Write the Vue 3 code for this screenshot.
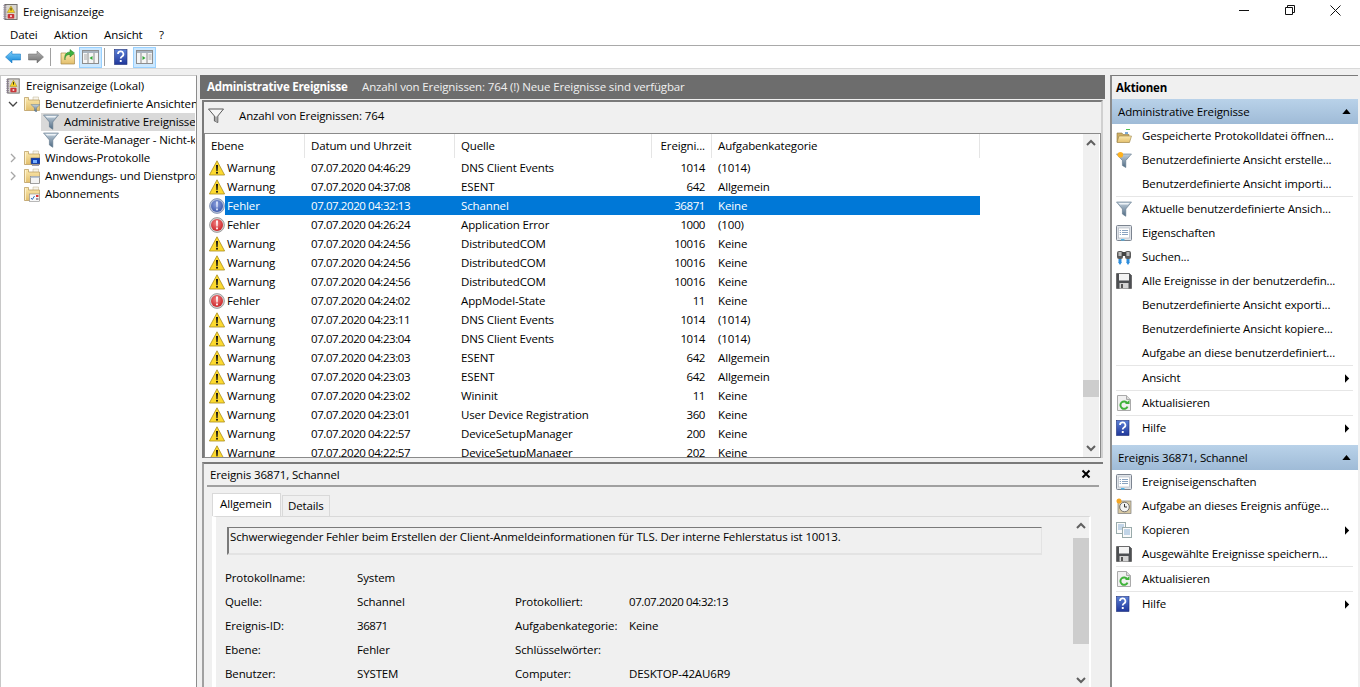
<script setup>
const S = 'Warnung', F = 'Fehler'
const rows = [
  ['w', S, '07.07.2020 04:46:29', 'DNS Client Events', '1014', '(1014)'],
  ['w', S, '07.07.2020 04:37:08', 'ESENT', '642', 'Allgemein'],
  ['s', F, '07.07.2020 04:32:13', 'Schannel', '36871', 'Keine'],
  ['e', F, '07.07.2020 04:26:24', 'Application Error', '1000', '(100)'],
  ['w', S, '07.07.2020 04:24:56', 'DistributedCOM', '10016', 'Keine'],
  ['w', S, '07.07.2020 04:24:56', 'DistributedCOM', '10016', 'Keine'],
  ['w', S, '07.07.2020 04:24:56', 'DistributedCOM', '10016', 'Keine'],
  ['e', F, '07.07.2020 04:24:02', 'AppModel-State', '11', 'Keine'],
  ['w', S, '07.07.2020 04:23:11', 'DNS Client Events', '1014', '(1014)'],
  ['w', S, '07.07.2020 04:23:04', 'DNS Client Events', '1014', '(1014)'],
  ['w', S, '07.07.2020 04:23:03', 'ESENT', '642', 'Allgemein'],
  ['w', S, '07.07.2020 04:23:03', 'ESENT', '642', 'Allgemein'],
  ['w', S, '07.07.2020 04:23:02', 'Wininit', '11', 'Keine'],
  ['w', S, '07.07.2020 04:23:01', 'User Device Registration', '360', 'Keine'],
  ['w', S, '07.07.2020 04:22:57', 'DeviceSetupManager', '200', 'Keine'],
  ['w', S, '07.07.2020 04:22:57', 'DeviceSetupManager', '202', 'Keine']
]
const tree = [
  { t: 'Ereignisanzeige (Lokal)', lv: 0, i: 'log' },
  { t: 'Benutzerdefinierte Ansichten', lv: 1, i: 'folderFilter', c: 'open' },
  { t: 'Administrative Ereignisse', lv: 2, i: 'funnel', sel: true },
  { t: 'Geräte-Manager - Nicht-kritische Ereignisse', lv: 2, i: 'funnel' },
  { t: 'Windows-Protokolle', lv: 1, i: 'folderPc', c: 'closed' },
  { t: 'Anwendungs- und Dienstprotokolle', lv: 1, i: 'folderWin', c: 'closed' },
  { t: 'Abonnements', lv: 1, i: 'folderCal' }
]
const actions1 = [
  { t: 'Gespeicherte Protokolldatei öffnen...', i: 'open' },
  { t: 'Benutzerdefinierte Ansicht erstelle...', i: 'funnelNew' },
  { t: 'Benutzerdefinierte Ansicht importi...', sep: true },
  { t: 'Aktuelle benutzerdefinierte Ansich...', i: 'funnel' },
  { t: 'Eigenschaften', i: 'props' },
  { t: 'Suchen...', i: 'find' },
  { t: 'Alle Ereignisse in der benutzerdefin...', i: 'save' },
  { t: 'Benutzerdefinierte Ansicht exporti...' },
  { t: 'Benutzerdefinierte Ansicht kopiere...' },
  { t: 'Aufgabe an diese benutzerdefiniert...', sep: true },
  { t: 'Ansicht', sub: true, sep: true },
  { t: 'Aktualisieren', i: 'refresh', sep: true },
  { t: 'Hilfe', i: 'help', sub: true }
]
const actions2 = [
  { t: 'Ereigniseigenschaften', i: 'props' },
  { t: 'Aufgabe an dieses Ereignis anfüge...', i: 'task' },
  { t: 'Kopieren', i: 'copy', sub: true },
  { t: 'Ausgewählte Ereignisse speichern...', i: 'save', sep: true },
  { t: 'Aktualisieren', i: 'refresh', sep: true },
  { t: 'Hilfe', i: 'help', sub: true }
]
const sections = [
  { title: 'Administrative Ereignisse', items: actions1 },
  { title: 'Ereignis 36871, Schannel', items: actions2 }
]
const fields = [
  ['Protokollname:', 'System', '', ''],
  ['Quelle:', 'Schannel', 'Protokolliert:', '07.07.2020 04:32:13'],
  ['Ereignis-ID:', '36871', 'Aufgabenkategorie:', 'Keine'],
  ['Ebene:', 'Fehler', 'Schlüsselwörter:', ''],
  ['Benutzer:', 'SYSTEM', 'Computer:', 'DESKTOP-42AU6R9']
]
const isNum = v => /^[\d.: ]+$/.test(v)
</script>

<template>
  <div class="app">
    <svg class="defs" width="0" height="0" aria-hidden="true">
      <defs>
        <linearGradient id="gFun" x1="0" y1="0" x2="0" y2="1"><stop offset="0" stop-color="#c3d0dc"/><stop offset="1" stop-color="#4f6b84"/></linearGradient>
        <linearGradient id="gFold" x1="0" y1="0" x2="0" y2="1"><stop offset="0" stop-color="#fbe9b0"/><stop offset="1" stop-color="#e3bf6c"/></linearGradient>
        <linearGradient id="gBlueArrow" x1="0" y1="0" x2="0" y2="1"><stop offset="0" stop-color="#7fd0fb"/><stop offset="1" stop-color="#1184d6"/></linearGradient>
        <linearGradient id="gGrayArrow" x1="0" y1="0" x2="0" y2="1"><stop offset="0" stop-color="#b5b5b5"/><stop offset="1" stop-color="#6f6f6f"/></linearGradient>
        <linearGradient id="gHelp" x1="0" y1="0" x2="0" y2="1"><stop offset="0" stop-color="#5a7fd6"/><stop offset="1" stop-color="#20379a"/></linearGradient>
        <radialGradient id="gRed" cx=".45" cy=".35" r=".7"><stop offset="0" stop-color="#f08080"/><stop offset="1" stop-color="#c81e22"/></radialGradient>
        <radialGradient id="gBlue" cx=".45" cy=".35" r=".7"><stop offset="0" stop-color="#8a9fdc"/><stop offset="1" stop-color="#3a55a8"/></radialGradient>

        <symbol id="w" viewBox="0 0 16 16"><path d="M8 .8 15.6 15H.4Z" fill="#fcd92f" stroke="#a98d1e" stroke-width=".8"/><path d="M7 5h2l-.4 6H7.4Z" fill="#111"/><rect x="7.1" y="11.8" width="1.8" height="1.8" fill="#111"/></symbol>
        <symbol id="e" viewBox="0 0 16 16"><circle cx="8" cy="8" r="7.4" fill="#d5d5d5" stroke="#8a8a8a" stroke-width=".8"/><circle cx="8" cy="8" r="6" fill="url(#gRed)"/><path d="M7 3.5h2l-.4 6H7.4Z" fill="#fff"/><rect x="7.1" y="10.5" width="1.8" height="1.8" fill="#fff"/></symbol>
        <symbol id="s" viewBox="0 0 16 16"><circle cx="8" cy="8" r="7.4" fill="#b9c4dc" stroke="#7485a8" stroke-width=".8"/><circle cx="8" cy="8" r="6" fill="url(#gBlue)"/><path d="M7 3.5h2l-.4 6H7.4Z" fill="#dfe6fa"/><rect x="7.1" y="10.5" width="1.8" height="1.8" fill="#dfe6fa"/></symbol>

        <symbol id="funnel" viewBox="0 0 16 16"><path d="M.5 1h15L9.8 8v7.3L6.4 13V8Z" fill="url(#gFun)" stroke="#5d7488" stroke-width=".6"/><path d="M2.5 2h11L12 3.5H4Z" fill="#eef3f7"/></symbol>
        <symbol id="funnelOut" viewBox="0 0 16 16"><path d="M.5 1h15L9.8 8v6.5L6.4 13V8Z" fill="#f6f6f6" stroke="#5a5a5a"/><path d="M7 8.5h2v5H7Z" fill="#a8a8a8"/></symbol>
        <symbol id="funnelNew" viewBox="0 0 16 16"><path d="M.5 2h15L9.8 8.5v7L6.4 13.5v-5Z" fill="url(#gFun)" stroke="#5d7488" stroke-width=".6"/><circle cx="4.4" cy="2.8" r="2.8" fill="#ffb21f"/></symbol>
        <symbol id="log" viewBox="0 0 16 18"><rect x="2" y="1" width="13" height="16" fill="#d9d6cf" stroke="#6d6a68"/><path d="M1 1.5v15M3 1.5v15" stroke="#7d6c8e" stroke-dasharray="1 1"/><path d="M8.5 2.5l4 7h-8Z" fill="#f9d423" stroke="#8f7d1c" stroke-width=".5"/><rect x="8.1" y="4.5" width=".9" height="3" fill="#111"/><rect x="5" y="11" width="7" height="5" rx="1" fill="#c9353a"/><circle cx="8.5" cy="13.4" r="1.1" fill="#f4d7d7"/></symbol>
        <g id="fold"><path d="M9 1h5.500v5H9Z" fill="#f7f4ea" stroke="#bfb38e" stroke-width=".5"/><path d="M.5 14.500V1.500h4v2.500h11v10.500Z" fill="url(#gFold)" stroke="#b4975a" stroke-width=".7"/><path d="M1.500 2v12" stroke="#fff6d8" stroke-width=".8"/></g>
        <symbol id="folder" viewBox="0 0 16 16"><use href="#fold"/></symbol>
        <symbol id="folderFilter" viewBox="0 0 16 16"><use href="#fold"/><path d="M7 8.500h9l-3.500 3.500v4l-2-1.200v-2.800Z" fill="url(#gFun)" stroke="#4f6b84" stroke-width=".4"/></symbol>
        <symbol id="folderPc" viewBox="0 0 16 16"><use href="#fold"/><rect x="7" y="8" width="9" height="6" fill="#0e3fb5" stroke="#556" stroke-width=".5"/><rect x="9" y="10" width="4" height="3" fill="#79b2ff"/><rect x="8" y="14.500" width="7" height="1.500" fill="#99a"/></symbol>
        <symbol id="folderWin" viewBox="0 0 16 16"><use href="#fold"/><rect x="6.500" y="8.500" width="9" height="7" fill="#f3f3f3" stroke="#7b7b7b" stroke-width=".7"/><rect x="6.500" y="8.500" width="9" height="1.500" fill="#b8c4d4"/></symbol>
        <symbol id="folderCal" viewBox="0 0 16 16"><use href="#fold"/><rect x="5.500" y="8" width="10" height="7.500" fill="#f8f8f8" stroke="#8c8c8c" stroke-width=".6"/><path d="M7 12l1.300 1.500L10.500 10" fill="none" stroke="#2d6ec2" stroke-width="1"/><rect x="12" y="9" width="2.500" height="2" fill="#d33"/><rect x="12" y="12" width="2.500" height="2" fill="#99a"/></symbol>
        <symbol id="open" viewBox="0 0 16 16"><path d="M1 5h5l1 1.500h6V14H1Z" fill="#cfae63" stroke="#8f7a45" stroke-width=".6"/><path d="M3 8h12.500L13.500 14.500H1Z" fill="url(#gFold)" stroke="#9a8348" stroke-width=".6"/><rect x="10" y="1" width="4" height="1" fill="#4fc04f"/><rect x="9" y="4" width="3" height="2" fill="#7aa9d8"/></symbol>
        <symbol id="props" viewBox="0 0 16 16"><rect x=".5" y=".5" width="15" height="15" rx="1" fill="#dfe3e8" stroke="#7c8490"/><rect x="2.500" y="3" width="11" height="10" fill="#fff" stroke="#a7afb9" stroke-width=".6"/><path d="M6 5.500h6M6 7.500h6M6 9.500h6" stroke="#6c8cb0" stroke-width=".8"/><path d="M3.700 5.500h1.300M3.700 7.500h1.300M3.700 9.500h1.300" stroke="#6c8cb0" stroke-width=".8"/><rect x="5" y="14" width="3.500" height="1.500" fill="#4fb4e8"/></symbol>
        <symbol id="find" viewBox="0 0 16 16"><rect x="1" y="2" width="6" height="8" rx="2" fill="#5c5c5c"/><rect x="9" y="2" width="6" height="8" rx="2" fill="#5c5c5c"/><rect x="6" y="3" width="4" height="4" fill="#444"/><rect x="2.500" y="3" width="3" height="4" fill="#bcbcbc"/><rect x="10.500" y="3" width="3" height="4" fill="#bcbcbc"/><path d="M4 10v3M12 10v3" stroke="#2e8ddc" stroke-width="3"/><path d="M2 13h4l-2 3ZM10 13h4l-2 3Z" fill="#2e8ddc"/></symbol>
        <symbol id="save" viewBox="0 0 16 16"><path d="M.5.500h13l2 2v13H.5Z" fill="#4d4f52" stroke="#333" stroke-width=".5"/><rect x="3" y="1" width="10" height="6.500" fill="#f3f3f3"/><rect x="3.500" y="10" width="9" height="5.500" fill="#d4d4d4"/><rect x="5" y="11" width="2" height="4" fill="#555"/></symbol>
        <symbol id="refresh" viewBox="0 0 16 16"><path d="M1.500.500h9l4 4v11h-13Z" fill="#f0f0f0" stroke="#aaa"/><path d="M10.500.500v4h4" fill="#dcdcdc" stroke="#aaa"/><path d="M11.300 8.200a3.700 3.700 0 1 0 .2 3.400" fill="none" stroke="#3fb23a" stroke-width="2"/><path d="M9 9h4.500v-4Z" fill="#3fb23a"/></symbol>
        <symbol id="help" viewBox="0 0 16 16"><rect x=".5" y=".5" width="12.500" height="15" fill="url(#gHelp)" stroke="#1c2d78" stroke-width=".6"/><path d="M4 5a2.700 2.700 0 1 1 4 2.400c-1 .6-1.300 1-1.300 2.100" fill="none" stroke="#fff" stroke-width="1.700"/><rect x="5.800" y="11" width="1.900" height="2" fill="#fff"/></symbol>
        <symbol id="task" viewBox="0 0 16 16"><rect x="2" y="3" width="13" height="12.500" fill="#d9c9a3" stroke="#7b7b7b" stroke-width=".7"/><circle cx="8.500" cy="9" r="4.800" fill="#f3f3f3" stroke="#555" stroke-width=".8"/><path d="M8.500 6v3h2.500" fill="none" stroke="#333"/><circle cx="3" cy="3" r="2.500" fill="#f5a623"/></symbol>
        <symbol id="copy" viewBox="0 0 16 16"><rect x=".5" y=".5" width="9" height="11" fill="#fafafa" stroke="#9aa"/><path d="M2 3h6M2 5h6M2 7h6" stroke="#5a91c4" stroke-width=".7"/><rect x="6.500" y="5.500" width="9" height="10" fill="#fafafa" stroke="#9aa"/><path d="M8 8h6M8 10h6M8 12h6" stroke="#5a91c4" stroke-width=".7"/></symbol>
        <symbol id="paneL" viewBox="0 0 17 14"><rect x=".5" y=".5" width="16" height="13" fill="#f5f5f5" stroke="#8d8d8d"/><rect x="1" y="1" width="15" height="2" fill="#a9b4bf"/><path d="M6 3v10M12 3v10" stroke="#8d8d8d"/><path d="M2 5h3M2 7h3M2 9h3" stroke="#8d8d8d" stroke-width=".7"/><path d="M10.500 6v4l-3-2Z" fill="#2fa835"/></symbol>
        <symbol id="paneR" viewBox="0 0 17 14"><rect x=".5" y=".5" width="16" height="13" fill="#f5f5f5" stroke="#8d8d8d"/><rect x="1" y="1" width="15" height="2" fill="#a9b4bf"/><path d="M11 3v10M5 3v10" stroke="#8d8d8d"/><path d="M12.500 5h3M12.500 7h3M12.500 9h3" stroke="#8d8d8d" stroke-width=".7"/><path d="M6.500 6v4l3-2Z" fill="#2fa835"/></symbol>
        <symbol id="folderUp" viewBox="0 0 16 16"><path d="M1 4h5l1 1.500h7.500V15H1Z" fill="url(#gFold)" stroke="#a6894a" stroke-width=".7"/><path d="M5 11c0-4 2-5.500 5-5.500V8l4.500-4L10 .5v2.500C6 3 4 6 5 11Z" fill="#3eb13e" stroke="#24802a" stroke-width=".5"/></symbol>
      </defs>
    </svg>

    <header class="title">
      <svg class="ic-log-t"><use href="#log"/></svg>
      <span class="title-t">Ereignisanzeige</span>
      <div class="win">
        <svg width="46" height="24" viewBox="0 0 46 24"><path d="M16 10.500h10" stroke="#111"/></svg>
        <svg width="46" height="24" viewBox="0 0 46 24"><path d="M16.500 7.500h7v7h-7ZM18.500 7.500v-2h7v7h-2" fill="none" stroke="#111"/></svg>
        <svg width="46" height="24" viewBox="0 0 46 24"><path d="M15.500 5.500l10 10M25.500 5.500l-10 10" stroke="#111" fill="none"/></svg>
      </div>
    </header>

    <nav class="menu"><span>Datei</span><span>Aktion</span><span>Ansicht</span><span>?</span></nav>

    <div class="toolbar">
      <svg class="tb-a" viewBox="0 0 16 14"><path d="M.5 7 7 1v3h8.500v6H7v3Z" fill="url(#gBlueArrow)" stroke="#0c6fbb" stroke-width=".5"/></svg>
      <svg class="tb-a tb-b" viewBox="0 0 16 14"><path d="M15.500 7 9 1v3H.5v6H9v3Z" fill="url(#gGrayArrow)" stroke="#666" stroke-width=".5"/></svg>
      <i class="tb-sep"></i>
      <svg class="tb-i"><use href="#folderUp"/></svg>
      <span class="tb-on tb-on1"><svg class="tb-p"><use href="#paneL"/></svg></span>
      <i class="tb-sep tb-sep2"></i>
      <svg class="tb-h"><use href="#help"/></svg>
      <span class="tb-on tb-on2"><svg class="tb-p"><use href="#paneR"/></svg></span>
    </div>

    <main class="main">
      <aside class="left">
        <div v-for="n in tree" :key="n.t" class="tn" :class="['lv' + n.lv, { sel: n.sel }]">
          <svg v-if="n.c" class="chev" viewBox="0 0 10 10"><path v-if="n.c === 'open'" d="M1 3l4 4 4-4" fill="none" stroke="#444" stroke-width="1.300"/><path v-else d="M3 1l4 4-4 4" fill="none" stroke="#a6a6a6" stroke-width="1.300"/></svg>
          <svg class="tn-i"><use :href="'#' + n.i"/></svg>
          <span class="tn-t">{{ n.t }}</span>
        </div>
      </aside>

      <section class="mid">
        <div class="mhead"><b>Administrative Ereignisse</b><span>Anzahl von Ereignissen: 764 (!) Neue Ereignisse sind verfügbar</span></div>
        <div class="upper">
          <div class="fbar"><svg class="f-i"><use href="#funnelOut"/></svg><span>Anzahl von Ereignissen: 764</span></div>
          <div class="list">
            <div class="table">
              <div class="grid thead">
                <div class="th c-ebene">Ebene</div>
                <div class="th">Datum und Uhrzeit</div>
                <div class="th">Quelle</div>
                <div class="th num">Ereigni...</div>
                <div class="th">Aufgabenkategorie</div>
              </div>
              <div class="tbody">
                <div v-for="(r, i) in rows" :key="i" class="grid row" :class="{ on: r[0] === 's' }">
                  <div class="ico"><svg class="rw"><use :href="'#' + r[0]"/></svg></div>
                  <div class="cell c1">{{ r[1] }}</div>
                  <div class="cell digits">{{ r[2] }}</div>
                  <div class="cell">{{ r[3] }}</div>
                  <div class="cell num digits">{{ r[4] }}</div>
                  <div class="cell">{{ r[5] }}</div>
                </div>
              </div>
            </div>
            <div class="sb sb1">
              <svg class="ar" viewBox="0 0 16 16"><path d="M4 10l4-4 4 4" fill="none" stroke="#606060" stroke-width="2"/></svg>
              <div class="thumb1"></div>
              <svg class="ar ar-b" viewBox="0 0 16 16"><path d="M4 6l4 4 4-4" fill="none" stroke="#606060" stroke-width="2"/></svg>
            </div>
          </div>
        </div>
        <div class="detail">
          <div class="dhead"><span>Ereignis 36871, Schannel</span><svg class="x" viewBox="0 0 10 10"><path d="M1.500 1.500l7 7M8.500 1.500l-7 7" stroke="#000" stroke-width="2"/></svg></div>
          <div class="tabs"><span class="tab act">Allgemein</span><span class="tab">Details</span></div>
          <div class="tabpane">
            <div class="tabbody">
              <div class="msg">Schwerwiegender Fehler beim Erstellen der Client-Anmeldeinformationen für TLS. Der interne Fehlerstatus ist 10013.</div>
              <div class="fields">
                <template v-for="f in fields" :key="f[0]">
                  <span v-for="(v, k) in f" :key="k" :class="{ digits: isNum(v) }">{{ v }}</span>
                </template>
              </div>
            </div>
            <div class="sb sb2">
              <svg class="ar" viewBox="0 0 16 16"><path d="M4 10l4-4 4 4" fill="none" stroke="#606060" stroke-width="2"/></svg>
              <div class="thumb2"></div>
              <svg class="ar ar-b" viewBox="0 0 16 16"><path d="M4 6l4 4 4-4" fill="none" stroke="#606060" stroke-width="2"/></svg>
            </div>
          </div>
        </div>
      </section>

      <aside class="right">
        <div class="rtitle">Aktionen</div>
        <template v-for="s in sections" :key="s.title">
          <div class="rsec"><span>{{ s.title }}</span><svg class="tri" viewBox="0 0 10 6"><path d="M0 6 5 0l5 6Z" fill="#000"/></svg></div>
          <div class="ritems">
            <div v-for="a in s.items" :key="a.t" class="ra" :class="{ sep: a.sep }">
              <div class="ra-row">
                <svg v-if="a.i" class="ra-i"><use :href="'#' + a.i"/></svg>
                <span v-else class="ra-i"></span>
                <span class="ra-t">{{ a.t }}</span>
                <svg v-if="a.sub" class="subm" viewBox="0 0 6 10"><path d="M0 0l5 5-5 5Z" fill="#000"/></svg>
              </div>
            </div>
          </div>
        </template>
      </aside>
    </main>
  </div>
</template>

<style>
html, body { margin: 0; background: #fff; }
</style>

<style scoped>
.app { width: 1360px; height: 687px; overflow: hidden; display: flex; flex-direction: column; background: #fff; color: #000; font: 11.5px/16px "Open Sans", "Noto Sans", sans-serif; letter-spacing: -.13px; }
.defs { display: block; height: 0; }
svg { display: block; flex: none; }
.digits { letter-spacing: -.42px; }

.title { height: 24px; display: flex; align-items: center; padding-left: 3px; }
.ic-log-t { width: 15px; height: 18px; margin-right: 5px; }
.win { margin-left: auto; display: flex; margin-right: -1px; }

.menu { height: 21px; display: flex; align-items: center; padding-left: 10px; gap: 16.5px; border-bottom: 1px solid #a9a9a9; }

.toolbar { height: 22px; display: flex; align-items: center; padding-left: 5px; border-bottom: 1px solid #d9d9d9; flex: none; }
.tb-a { width: 16px; height: 14px; }
.tb-b { margin-left: 7px; }
.tb-sep { width: 1px; height: 18px; background: #a0a0a0; margin-left: 6px; }
.tb-sep2 { margin-left: 2px; }
.tb-i { width: 16px; height: 16px; margin-left: 9px; }
.tb-on { width: 23px; height: 21px; box-sizing: border-box; background: #cce8ff; border: 1px solid #99d1ff; display: flex; align-items: center; justify-content: center; }
.tb-on1 { margin-left: 3px; }
.tb-on2 { margin-left: 3px; }
.tb-p { width: 17px; height: 14px; }
.tb-h { width: 16px; height: 16px; margin-left: 9px; }

.main { flex: 1; min-height: 0; background: #f0f0f0; padding-top: 6px; display: flex; }

.left { width: 197px; flex: none; box-sizing: border-box; background: #fff; border: 1px solid #c8c8c8; border-right: 1px solid #8c8c8c; border-bottom: 0; padding: 1px 0 0; overflow: hidden; }
.tn { height: 18px; display: flex; align-items: center; white-space: nowrap; overflow: hidden; width: 194px; }
.tn-i { width: 16px; height: 16px; }
.lv0 { padding-left: 4px; }
.lv0 .tn-t { margin-left: 5px; }
.lv1 { padding-left: 23px; }
.lv1 .tn-t { margin-left: 5px; }
.chev { width: 10px; height: 10px; margin-left: -16px; margin-right: 6px; }
.lv2 { margin-left: 40px; width: 154px; padding-left: 2px; box-sizing: border-box; }
.lv2 .tn-t { margin-left: 5px; }
.tn.sel { background: #d9d9d9; }

.mid { width: 905px; margin-left: 3px; flex: none; display: flex; flex-direction: column; }
.mhead { height: 24px; flex: none; background: #6d6d6d; color: #f0f0f0; display: flex; align-items: center; padding-left: 7px; }
.mhead b { color: #fff; font-weight: 700; letter-spacing: -.24px; width: 155px; }
.upper { margin: 1px 2px 0 2px; height: 358px; flex: none; box-sizing: border-box; border: 2px solid #7a7a7a; border-bottom: 0; border-right-color: #d0d0d0; display: flex; flex-direction: column; }
.fbar { height: 31px; flex: none; box-sizing: border-box; display: flex; align-items: center; padding: 0 0 4px 4px; }
.f-i { width: 16px; height: 16px; }
.fbar span { margin-left: 15px; }
.list { flex: 1; min-height: 0; box-sizing: border-box; border: 1px solid #8a8a8a; background: #fff; display: flex; overflow: hidden; }
.table { flex: 1; min-width: 0; display: flex; flex-direction: column; overflow: hidden; }
.grid { display: grid; grid-template-columns: 20px 80px 150px 197px 60px 268px; width: 775px; }
.thead { height: 24px; flex: none; }
.th { line-height: 24px; padding-left: 6px; border-right: 1px solid #e5e5e5; box-sizing: border-box; white-space: nowrap; overflow: hidden; }
.c-ebene { grid-column: 1 / 3; }
.th.num { padding-left: 0; padding-right: 6px; text-align: right; }
.tbody { flex: 1; min-height: 0; overflow: hidden; }
.row { height: 19px; }
.ico { display: flex; align-items: center; padding-left: 4px; }
.rw { width: 16px; height: 16px; }
.cell { line-height: 19px; padding-left: 6px; white-space: nowrap; overflow: hidden; }
.c1 { padding-left: 2px; }
.cell.num { padding: 0 7px 0 0; text-align: right; }
.row.on .cell { background: #0078d7; color: #fff; }

.sb { width: 16px; flex: none; background: #f0f0f0; display: flex; flex-direction: column; }
.sb1 { margin-right: 1px; }
.ar { width: 16px; height: 16px; }
.sb1 .ar { margin-top: 1px; }
.sb1 .ar-b { margin-top: auto; margin-bottom: 1px; }
.thumb1 { height: 17px; margin-top: 229px; background: #cdcdcd; }

.detail { margin: 4px 2px 0 2px; flex: 1; min-height: 0; box-sizing: border-box; border-top: 2px solid #7a7a7a; border-left: 2px solid #a0a0a0; display: flex; flex-direction: column; }
.dhead { height: 23px; flex: none; margin: 0 4px 0 3px; box-sizing: border-box; display: flex; align-items: center; justify-content: space-between; padding: 0 8px 0 3px; border-bottom: 2px solid #a0a0a0; }
.dhead .x { width: 10px; height: 10px; margin-bottom: 2px; }
.tabs { margin: 6px 0 0 8px; height: 23px; flex: none; display: flex; align-items: flex-end; }
.tab { box-sizing: border-box; height: 21px; line-height: 19px; padding: 0 5px; border: 1px solid #d9d9d9; border-bottom: 0; margin-left: 1px; background: #f0f0f0; }
.tab.act { height: 23px; line-height: 20px; width: 69px; padding: 0 0 0 7px; margin-left: 0; background: #fff; }
.tabpane { margin: 0 12px 0 8px; flex: 1; min-height: 0; box-sizing: border-box; border-top: 1px solid #d9d9d9; border-left: 4px solid #fff; border-right: 2px solid #fff; display: flex; }
.tabbody { flex: 1; min-width: 0; box-sizing: border-box; padding: 10px 0 0 9px; }
.msg { width: 815px; height: 28px; box-sizing: border-box; margin-left: 2px; padding-left: 1px; border: 1px solid #e3e3e3; border-width: 1px 1px 2px 1px; border-top-color: #7a7a7a; border-left: 2px solid #7a7a7a; white-space: nowrap; overflow: hidden; line-height: 17px; }
.fields { display: grid; grid-template-columns: 132px 158px 114px 1fr; grid-auto-rows: 24px; margin-top: 11px; align-items: center; white-space: nowrap; }
.sb2 { width: 16px; }
.sb2 .ar { margin-top: 1px; }
.sb2 .ar-b { margin-top: auto; margin-bottom: -1px; }
.thumb2 { height: 106px; margin-top: 4px; background: #cdcdcd; }

.right { width: 248px; margin-left: 5px; flex: none; box-sizing: border-box; background: #fff; border-left: 2px solid #8c8c8c; border-top: 1px solid #7a7a7a; overflow: hidden; }
.rtitle { height: 23px; line-height: 23px; padding-left: 4px; background: #f0f0f0; font-weight: 700; letter-spacing: -.2px; }
.rsec { height: 25px; display: flex; align-items: center; justify-content: space-between; padding: 0 7px 0 6px; background: linear-gradient(#b9d2e9, #9fbbd7); }
.tri { width: 9px; height: 5px; }
.ritems { padding-bottom: 5px; }
.ra { padding: 0 5px 0 4px; }
.ra.sep::after { content: ""; display: block; height: 1px; background: #e6e6e6; }
.ra-row { height: 24px; display: flex; align-items: center; }
.ra-i { width: 16px; height: 16px; flex: none; }
.ra-t { margin-left: 10px; white-space: nowrap; }
.subm { width: 5px; height: 9px; margin-left: auto; margin-right: 3px; }
</style>
